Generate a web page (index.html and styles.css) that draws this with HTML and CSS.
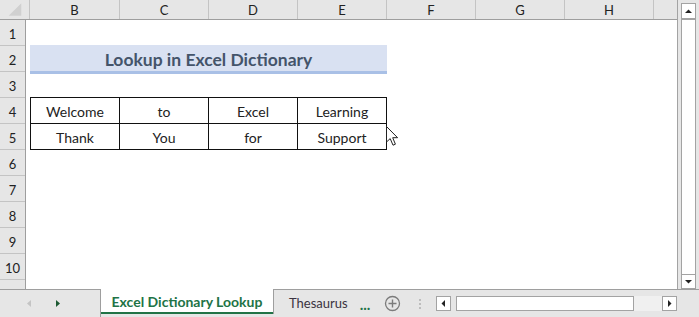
FILE: index.html
```html
<!DOCTYPE html>
<html lang="en">
<head>
  <meta charset="UTF-8">
  <title>Lookup in Excel Dictionary</title>
  <link rel="stylesheet" href="styles.css">
</head>
<body>
  <div class="workbook">
    <div class="main">
      <div class="sheet">
        <div class="col-headers">
          <div class="corner">
            <svg width="30" height="19" viewBox="0 0 30 19"><polygon points="22,3 22,16 9,16" fill="#d0d0d0"/></svg>
          </div>
          <div class="col-hdr wide">B</div>
          <div class="col-hdr">C</div>
          <div class="col-hdr">D</div>
          <div class="col-hdr">E</div>
          <div class="col-hdr">F</div>
          <div class="col-hdr">G</div>
          <div class="col-hdr">H</div>
          <div class="col-hdr last"></div>
        </div>
        <div class="sheet-body">
          <div class="row-headers">
            <div class="row-hdr">1</div>
            <div class="row-hdr">2</div>
            <div class="row-hdr">3</div>
            <div class="row-hdr">4</div>
            <div class="row-hdr">5</div>
            <div class="row-hdr">6</div>
            <div class="row-hdr">7</div>
            <div class="row-hdr">8</div>
            <div class="row-hdr">9</div>
            <div class="row-hdr">10</div>
          </div>
          <div class="cells">
            <div class="title">Lookup in Excel Dictionary</div>
            <div class="words">
              <div class="word">Welcome</div>
              <div class="word">to</div>
              <div class="word">Excel</div>
              <div class="word">Learning</div>
              <div class="word">Thank</div>
              <div class="word">You</div>
              <div class="word">for</div>
              <div class="word">Support</div>
            </div>
            <svg class="pointer" width="14" height="21" viewBox="0 0 14 21">
              <path d="M0.5 0.5 L0.5 16 L4.2 12.6 L7 19.2 L9.4 18.2 L6.7 11.7 L11.6 11.7 Z" fill="#fff" stroke="#222" stroke-width="1"/>
            </svg>
          </div>
        </div>
      </div>
      <div class="vscroll">
        <div class="vbar">
          <div class="vbtn up">
            <svg width="13" height="13" viewBox="0 0 13 13"><polygon points="3,8 10,8 6.5,4.5" fill="#222"/></svg>
          </div>
          <div class="vtrack"></div>
          <div class="vbtn down">
            <svg width="13" height="13" viewBox="0 0 13 13"><polygon points="3,5 10,5 6.5,8.5" fill="#222"/></svg>
          </div>
        </div>
      </div>
    </div>

    <div class="tabbar">
      <div class="tab-nav">
        <svg width="8" height="10" viewBox="0 0 8 10"><polygon points="6,1 6,8 2,4.5" fill="#c4c4c4"/></svg>
        <svg width="8" height="10" viewBox="0 0 8 10"><polygon points="2,1 2,8 6,4.5" fill="#1d5a33"/></svg>
      </div>
      <div class="sheet-tab active">Excel Dictionary Lookup</div>
      <div class="sheet-tab">Thesaurus</div>
      <div class="tab-rest">
        <div class="more">...</div>
        <div class="add">
          <svg width="17" height="17" viewBox="0 0 17 17">
            <circle cx="8.5" cy="8.5" r="7" fill="none" stroke="#7b7b7b" stroke-width="1.3"/>
            <path d="M8.5 4.5 V12.5 M4.5 8.5 H12.5" stroke="#7b7b7b" stroke-width="1.4"/>
          </svg>
        </div>
        <div class="split"><span></span><span></span><span></span></div>
        <div class="hscroll">
          <div class="hbtn">
            <svg width="13" height="13" viewBox="0 0 13 13"><polygon points="8,3 8,10 4.5,6.5" fill="#222"/></svg>
          </div>
          <div class="hthumb"></div>
          <div class="htrack"></div>
          <div class="hbtn">
            <svg width="13" height="13" viewBox="0 0 13 13"><polygon points="5,3 5,10 8.5,6.5" fill="#222"/></svg>
          </div>
        </div>
      </div>
    </div>
  </div>
</body>
</html>
```

FILE: styles.css
```css
body {
  margin: 0;
  font-family: Lato, "Open Sans", sans-serif;
  background: #e6e6e6;
  color: #222;
}
.workbook {
  width: 699px;
  height: 317px;
  overflow: hidden;
  display: flex;
  flex-direction: column;
}
.main {
  display: flex;
  height: 289px;
}
.sheet {
  width: 677px;
  border-right: 1px solid #a3a3a3;
  background: #fff;
  display: flex;
  flex-direction: column;
}

/* column letters */
.col-headers {
  display: flex;
  height: 20px;
  box-sizing: border-box;
  border-bottom: 1px solid #9e9e9e;
  background: #e6e6e6;
}
.corner {
  width: 30px;
  box-sizing: border-box;
  border-right: 1px solid #c4c4c4;
  display: flex;
}
.col-hdr {
  width: 89px;
  box-sizing: border-box;
  border-right: 1px solid #c4c4c4;
  display: flex;
  align-items: center;
  justify-content: center;
  font-size: 13px;
  padding-top: 1px;
}
.col-hdr.wide {
  width: 90px;
}
.col-hdr.last {
  flex: 1;
  border-right: none;
}

/* row numbers + cells */
.sheet-body {
  flex: 1;
  display: flex;
}
.row-headers {
  width: 26px;
  box-sizing: border-box;
  border-right: 1px solid #9e9e9e;
  background: #e6e6e6;
  display: flex;
  flex-direction: column;
}
.row-hdr {
  height: 26px;
  box-sizing: border-box;
  border-bottom: 1px solid #c4c4c4;
  display: flex;
  align-items: center;
  justify-content: center;
  font-size: 13px;
  padding-top: 3px;
}
.cells {
  flex: 1;
  position: relative;
  display: grid;
  grid-template-columns: 4px 90px repeat(6, 89px) 1fr;
  grid-template-rows: repeat(10, 26px) 1fr;
}
.title {
  grid-row: 2;
  grid-column: 2 / 6;
  margin: -1px 0 -2px;
  border-bottom: 3px solid #a9c0e6;
  background: #d9e1f2;
  color: #44546a;
  font-size: 17.5px;
  font-weight: bold;
  display: flex;
  align-items: center;
  justify-content: center;
  padding-top: 2px;
}
.words {
  grid-row: 4 / 6;
  grid-column: 2 / 6;
  margin-top: -1px;
  align-self: start;
  display: grid;
  grid-template-columns: repeat(4, 89px);
  border-top: 1px solid #111;
  border-left: 1px solid #111;
}
.word {
  height: 26px;
  box-sizing: border-box;
  border-right: 1px solid #111;
  border-bottom: 1px solid #111;
  display: flex;
  align-items: center;
  justify-content: center;
  font-size: 14px;
  padding-top: 2px;
}
.pointer {
  position: absolute;
  left: 360px;
  top: 106px;
}

/* vertical scrollbar */
.vscroll {
  flex: 1;
  padding: 3px 0 0 3px;
}
.vbar {
  width: 15px;
  height: 286px;
  box-sizing: border-box;
  border: 1px solid #a3a3a3;
  border-bottom: none;
  background: #fff;
  display: flex;
  flex-direction: column;
}
.vbtn {
  height: 14px;
  display: flex;
  align-items: center;
  justify-content: center;
}
.vbtn.up {
  border-bottom: 2px solid #a3a3a3;
}
.vbtn.down {
  height: 15px;
  border-top: 1px solid #a3a3a3;
  border-bottom: 1px solid #a3a3a3;
  box-sizing: border-box;
}
.vtrack {
  flex: 1;
}

/* sheet tabs */
.tabbar {
  flex: 1;
  display: flex;
  align-items: flex-start;
}
.tab-nav {
  width: 101px;
  height: 28px;
  box-sizing: border-box;
  border-top: 1px solid #9e9e9e;
  border-right: 1px solid #9e9e9e;
  display: flex;
  align-items: center;
  gap: 21px;
  padding: 1px 0 0 25px;
}
.sheet-tab {
  height: 25px;
  box-sizing: border-box;
  display: flex;
  align-items: center;
  font-size: 13px;
  color: #3a3340;
  width: 84px;
  padding: 2px 0 0 15px;
  border-top: 1px solid #9e9e9e;
  border-left: 1px solid #9e9e9e;
}
.sheet-tab.active {
  width: 172px;
  border: none;
  border-bottom: 2px solid #217346;
  background: #fff;
  color: #217346;
  font-size: 14px;
  font-weight: bold;
  justify-content: center;
  padding: 1px 0 0;
}
.tab-rest {
  flex: 1;
  height: 28px;
  box-sizing: border-box;
  border-top: 1px solid #9e9e9e;
  display: flex;
  align-items: center;
}
.more {
  width: 16px;
  color: #217346;
  font-weight: bold;
  font-size: 15px;
  text-align: center;
  margin-top: 1px;
}
.add {
  width: 38px;
  display: flex;
  justify-content: center;
}
.split {
  width: 18px;
  display: flex;
  flex-direction: column;
  align-items: center;
  gap: 2px;
}
.split span {
  width: 2px;
  height: 2px;
  background: #bdbdbd;
}
.hscroll {
  margin-left: 7px;
  width: 241px;
  height: 15px;
  display: flex;
}
.hbtn {
  width: 15px;
  box-sizing: border-box;
  border: 1px solid #a3a3a3;
  background: #fff;
  display: flex;
  align-items: center;
  justify-content: center;
}
.hthumb {
  margin-left: 5px;
  width: 178px;
  box-sizing: border-box;
  border: 1px solid #a3a3a3;
  background: #fff;
}
.htrack {
  flex: 1;
  background: #f0f0f0;
}
```
